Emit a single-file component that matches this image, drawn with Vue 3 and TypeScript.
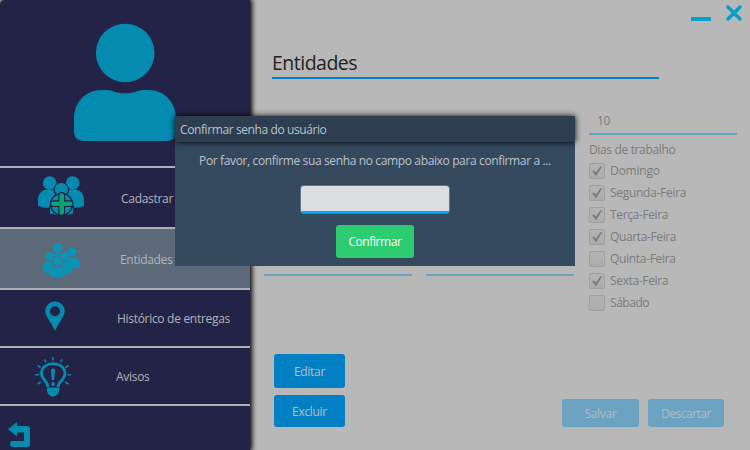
<script setup lang="ts">
interface Day {
  name: string
  checked: boolean
  width: number
}

const days: Day[] = [
  { name: 'Domingo', checked: true, width: 50 },
  { name: 'Segunda-Feira', checked: true, width: 76.5 },
  { name: 'Terça-Feira', checked: true, width: 58.5 },
  { name: 'Quarta-Feira', checked: true, width: 66.5 },
  { name: 'Quinta-Feira', checked: false, width: 66 },
  { name: 'Sexta-Feira', checked: true, width: 58.5 },
  { name: 'Sábado', checked: false, width: 39.5 },
]
</script>

<template>
  <div class="window">
    <aside class="sidebar">
      <div class="profile">
        <svg width="102" height="118" viewBox="74 23 102 118">
          <circle cx="125.2" cy="53" r="29.3" />
          <path d="M74 133V119C74 102 86 90 101 90H107C112 90 115 93.300 125 93.300C135 93.300 138 90 143 90H149C164 90 176 102 176 119V133Q175 141 166 141H84Q75 141 74 133Z" />
        </svg>
      </div>
      <div class="item tall">
        <svg class="ic-add" width="50" height="42" viewBox="36 176 50 42">
          <circle cx="49.700" cy="184" r="6.800" />
          <circle cx="72.700" cy="184" r="6.800" />
          <path d="M38 207V200Q39 191 47 190.500H52Q56 191 58 194V206L50 209Q43 209 38 207Z" />
          <path d="M84 207V200Q83 191 75 190.500H70Q66 191 64 194V206L72 209Q79 209 84 207Z" />
          <circle class="cut" cx="61.300" cy="191" r="7.800" />
          <path class="cut" d="M49 217V207H74V217Z" />
          <circle cx="61.300" cy="190.500" r="6.600" />
          <path d="M50 214.500V208H73V214.500Q61.500 217.500 50 214.500Z" />
          <circle class="ring" cx="61.500" cy="205.300" r="11" />
          <path class="plus-cut" d="M61.700 196.500V213.500M53.300 204.700H70.200" />
          <path class="plus" d="M61.700 196.500V213.500M53.300 204.700H70.200" />
        </svg>
        <span class="label">Cadastrar</span>
      </div>
      <div class="item tall active">
        <svg class="ic-group" width="40" height="36" viewBox="41 242 40 36">
          <circle cx="57.600" cy="247.800" r="4.900" />
          <path d="M54 254Q57.500 252.500 61.500 254V257H54Z" />
          <circle cx="72.300" cy="251.700" r="4.400" />
          <path d="M68 258Q76 255.500 79 260.500Q80 263 80 267Q77 268.800 73 268.300Q72 263 67.500 261Z" />
          <circle cx="50" cy="256.500" r="4.400" />
          <path d="M42.800 272V267Q43.500 261.800 49 261.500Q52 261.500 53.500 263.500L54 266Q50.500 268 50 272.700Q46 273.500 42.800 272Z" />
          <circle cx="65.200" cy="256.500" r="4.400" />
          <path d="M62 263Q65 261 68.500 262Q72.500 263.500 72.500 268V272Q69 273.500 66 272.700Q65 268 61 266Z" />
          <circle class="cut" cx="57.600" cy="261" r="5.700" />
          <circle cx="57.600" cy="261" r="4.700" />
          <path d="M50 276V272.500Q51 266.800 57.600 266.500Q64.500 266.800 65.300 272.500V276Q57.500 278.500 50 276Z" />
        </svg>
        <span class="label">Entidades</span>
      </div>
      <div class="item">
        <svg class="ic-pin" width="20" height="30" viewBox="44.500 299.500 20 30">
          <path fill-rule="evenodd" d="M54.500 300C60 300 64.200 304.300 64.200 309.500C64.200 315 58 321 54.500 329.500C51 321 44.800 315 44.800 309.500C44.800 304.300 49 300 54.500 300ZM54.500 304.700A5 5 0 1 0 54.500 314.700A5 5 0 1 0 54.500 304.700Z" />
        </svg>
        <span class="label long">Histórico de entregas</span>
      </div>
      <div class="item">
        <svg class="ic-bulb" width="38" height="42" viewBox="34 356 38 42">
          <path class="bulb" d="M48 387Q47.500 383 44.500 380Q41.500 377 41.500 373.500C41.500 367 47 363.700 53 363.700C59 363.700 65 367 65 373.500Q65 377 62 380Q58.500 383 58 387" />
          <path d="M47 387.500H59V391Q58.500 394 56.500 395Q53 398.500 49.500 395Q47.500 394 47 391Z" />
          <path d="M51 369.500Q53 367.500 55 369.500L54.200 380H51.800Z" />
          <circle cx="53" cy="384" r="1.900" />
          <path class="rays" d="M53 357V360.500M44.300 359.500L46 362M62.200 359.500L60.500 362M37.500 365.500L40.700 367.500M68.500 365.500L65.300 367.500M35 374.700H39M67.500 374.700H71M37.500 384L40.700 382M68.500 384L65.300 382" />
        </svg>
        <span class="label">Avisos</span>
      </div>
      <div class="back">
        <svg width="22" height="25" viewBox="8 422 22 25">
          <path d="M8 429.300L17 422V426H27Q30 426 30 429V444Q30 447 27 447H12Q10 446.500 10 444Q10 441.500 12 441H24V432.500H17V436.500Z" />
        </svg>
      </div>
    </aside>

    <main class="content">
      <div class="controls">
        <span class="minimize"></span>
        <svg width="16" height="16" viewBox="0 0 16 16"><path d="M2 2L14 14M14 2L2 14" /></svg>
      </div>
      <h1 class="title"><span>Entidades</span></h1>
      <div class="columns">
        <div class="left">
          <div class="fields"><span></span><span></span></div>
          <div class="edit-buttons">
            <button class="btn edit">Editar</button>
            <button class="btn remove">Excluir</button>
          </div>
        </div>
        <div class="right">
          <div class="number">10</div>
          <div class="caption">Dias de trabalho</div>
          <div v-for="day in days" :key="day.name" class="day">
            <span class="box">
              <svg v-if="day.checked" width="16" height="16" viewBox="0 0 16 16">
                <path d="M3.300 8.200L4.800 7.200L6.800 9.700L11.500 3.200H13.200L7.300 12.700H6.500Z" />
              </svg>
            </span>
            <svg class="day-label" :width="day.width + 2" height="18">
              <text x="0" y="13" :textLength="day.width">{{ day.name }}</text>
            </svg>
          </div>
          <div class="save-buttons">
            <button class="btn faded save">Salvar</button>
            <button class="btn faded discard">Descartar</button>
          </div>
        </div>
      </div>
    </main>

    <section class="dialog">
      <header>Confirmar senha do usuário</header>
      <p>Por favor, confirme sua senha no campo abaixo para confirmar a ...</p>
      <div class="password"></div>
      <button class="btn confirm">Confirmar</button>
    </section>
  </div>
</template>

<style>
body {
  margin: 0;
  overflow: hidden;
}
</style>

<style scoped>
.window {
  position: relative;
  display: flex;
  width: 750px;
  height: 450px;
  overflow: hidden;
  background: #b8b8b8;
  font-family: 'Open Sans', 'Noto Sans', sans-serif;
  font-size: 12px;
  letter-spacing: -0.3px;
}
.window * {
  box-sizing: border-box;
}
.sidebar {
  z-index: 1;
  display: flex;
  flex-direction: column;
  flex: 0 0 250px;
  background: #232347;
  border-radius: 5px 0 0;
  box-shadow: 1px 0 5px 1px #000;
}
.sidebar svg {
  display: block;
  flex: none;
  fill: #058bb0;
}
.profile {
  height: 168px;
  padding: 23px 0 0 74px;
  border-bottom: 2px solid #b2b0b5;
}
.item {
  display: flex;
  align-items: center;
  height: 58px;
  border-bottom: 2px solid #b2b0b5;
}
.item.tall {
  height: 61px;
}
.item.active {
  background: #5b6979;
}
.sidebar .active svg {
  fill: #0b93b5;
}
.sidebar .cut {
  fill: #232347;
}
.sidebar .active .cut {
  fill: #5b6979;
}
.ring {
  stroke: #232347;
  stroke-width: 1.300px;
}
.plus-cut,
.plus {
  fill: none;
  stroke: #232347;
  stroke-width: 6.800px;
  stroke-linecap: round;
}
.plus {
  stroke: #08a36f;
  stroke-width: 4.600px;
}
.ic-add {
  margin: -3px 35px 0 36px;
}
.ic-group {
  margin: 2px 39px 0 41px;
}
.ic-pin {
  margin: -5px 52px 0 45px;
}
.ic-bulb {
  margin: 1px 44px 0 34px;
}
.bulb {
  fill: none;
  stroke: #058bb0;
  stroke-width: 2.800px;
}
.rays {
  stroke: #058bb0;
  stroke-width: 1.500px;
}
.label {
  padding-top: 1px;
  color: #b4b4b8;
  white-space: nowrap;
}
.back {
  padding: 16px 0 0 8px;
}
.content {
  flex: 1;
  display: flex;
  flex-direction: column;
  padding-left: 14px;
}
.controls {
  display: flex;
  gap: 15px;
  justify-content: flex-end;
  height: 40px;
  padding: 5px 8px 0 0;
}
.controls svg {
  fill: none;
  stroke: #05a0c6;
  stroke-width: 3.500px;
  stroke-linecap: round;
}
.minimize {
  width: 20px;
  height: 4px;
  margin-top: 12px;
  background: #05a0c6;
}
.title {
  width: 387px;
  height: 39px;
  margin: 0 0 0 8px;
  padding-top: 9px;
  border-bottom: 2px solid #057fc1;
  color: #222;
  font-size: 19.500px;
  line-height: 27px;
  font-weight: 400;
  letter-spacing: -0.500px;
}
.columns {
  display: flex;
  gap: 15px;
}
.left {
  width: 310px;
}
.fields {
  display: flex;
  gap: 14px;
  height: 197px;
}
.fields span {
  width: 148px;
  border-bottom: 2px solid #6ba2bd;
}
.edit-buttons {
  display: flex;
  flex-direction: column;
  gap: 7px;
  padding: 78px 0 0 10px;
}
.btn {
  display: flex;
  align-items: center;
  justify-content: center;
  padding: 0;
  border: 0;
  border-radius: 3px;
  background: #0280c3;
  color: #b9bfc6;
  font: inherit;
  letter-spacing: inherit;
}
.edit {
  width: 71px;
  height: 34px;
}
.remove {
  width: 71px;
  height: 32px;
}
.right {
  width: 148px;
  color: #7c7c7c;
}
.number {
  height: 56px;
  padding: 32px 0 0 8px;
  border-bottom: 2px solid #6ba2bd;
  line-height: 20px;
}
.caption {
  height: 25px;
  padding-top: 5px;
  line-height: 19px;
  letter-spacing: -0.350px;
}
.day {
  display: flex;
  align-items: center;
  gap: 5px;
  height: 22px;
}
.box {
  width: 16px;
  height: 16px;
  border: 1px solid #a0a0a0;
  border-radius: 2px;
  background: linear-gradient(#b4b4b4, #acacac);
}
.box svg {
  display: block;
  margin: -1px;
  fill: #7a7a7a;
}
.day-label {
  fill: #7c7c7c;
  letter-spacing: 0;
}
.save-buttons {
  display: flex;
  gap: 9px;
  margin: 85px 0 0 -27px;
}
.faded {
  height: 28px;
  background: #6ca3c0;
  color: #b2bac1;
}
.save {
  width: 77px;
}
.discard {
  width: 76px;
  letter-spacing: -0.500px;
}
.dialog {
  position: absolute;
  z-index: 2;
  left: 175px;
  top: 116px;
  display: flex;
  flex-direction: column;
  align-items: center;
  width: 400px;
  height: 150px;
  background: #34495e;
  color: #bec2c7;
}
.dialog header {
  width: 400px;
  height: 26px;
  padding-left: 5px;
  background: #2c3e50;
  box-shadow: 0 0 6px 0 #000;
  line-height: 28px;
  letter-spacing: -0.400px;
}
.dialog p {
  margin: 9px 0 0;
  line-height: 19px;
  letter-spacing: -0.365px;
  white-space: nowrap;
}
.password {
  width: 150px;
  height: 29px;
  margin-top: 15px;
  border: 1px solid #66758a;
  border-bottom: 0;
  border-radius: 4px;
  background: linear-gradient(#dcdde1 25px, #05a8ff 25px, #05a8ff 27px, #66758a 27px);
}
.confirm {
  width: 78px;
  height: 33px;
  margin: 11px 0 0 0;
  background: #2ecc71;
  color: #fff;
  letter-spacing: -0.400px;
}
</style>
